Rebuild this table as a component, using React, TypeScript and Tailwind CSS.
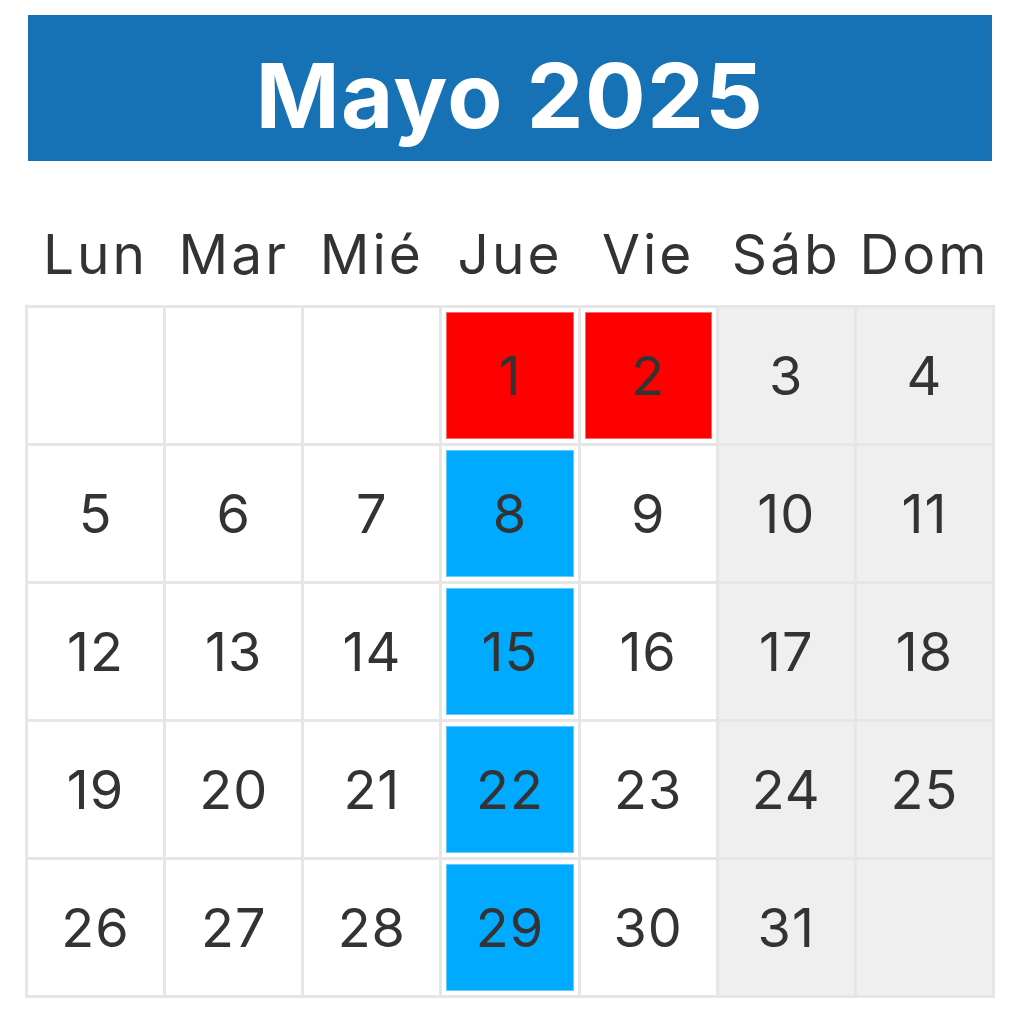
import React from "react";

type Cell = { n?: number; kind?: "red" | "blue"; weekend?: boolean };

const days = ["Lun", "Mar", "Mié", "Jue", "Vie", "Sáb", "Dom"];

function buildCells(): Cell[] {
  const cells: Cell[] = [];
  const offset = 3;
  for (let i = 0; i < 35; i++) {
    const d = i - offset + 1;
    const col = i % 7;
    const weekend = col >= 5;
    if (d < 1 || d > 31) {
      cells.push({ weekend });
    } else {
      let kind: Cell["kind"] = undefined;
      if (d === 1 || d === 2) kind = "red";
      else if (col === 3) kind = "blue";
      cells.push({ n: d, kind, weekend });
    }
  }
  return cells;
}

export default function App() {
  const cells = buildCells();
  const font = { fontFamily: "Inter, 'Open Sans', sans-serif" };
  return (
    <div className="w-[1020px] h-[1024px] bg-white relative" style={font}>
      <div className="pt-[15px] pl-[28px]">
        <div className="w-[964px] h-[146px] bg-[#1771b5] flex items-center justify-center pt-[16px]">
          <span className="text-white font-bold text-[90px] leading-none tracking-[1.5px]">
            Mayo 2025
          </span>
        </div>
      </div>
      <div className="pl-[25px] h-[144px] flex items-center pt-[42px]">
        <div className="w-[970px] grid grid-cols-7 px-[3px] gap-[3px]">
          {days.map((d) => (
            <div key={d} className="text-center text-[#333333] text-[55px] leading-none tracking-[3px] whitespace-nowrap">
              {d}
            </div>
          ))}
        </div>
      </div>
      <div className="pl-[25px]">
        <div className="w-[970px] grid grid-cols-7 gap-[3px] p-[3px] bg-[#e6e6e6]">
          {cells.map((c, i) => (
            <div
              key={i}
              className={`h-[135px] ${c.weekend ? "bg-[#efefef]" : "bg-white"} ${c.kind ? "p-[4px]" : ""}`}
            >
              {c.kind ? (
                <div
                  className={`w-full h-full flex items-center justify-center border ${
                    c.kind === "red" ? "bg-[#ff0000] border-[#ff6a6a]" : "bg-[#00aaff] border-[#66ccff]"
                  }`}
                >
                  <span className="text-[#333333] text-[54px] leading-none tracking-[1px]">{c.n}</span>
                </div>
              ) : (
                <div className="w-full h-full flex items-center justify-center">
                  <span className="text-[#333333] text-[54px] leading-none tracking-[1px]">{c.n ?? ""}</span>
                </div>
              )}
            </div>
          ))}
        </div>
      </div>
    </div>
  );
}
